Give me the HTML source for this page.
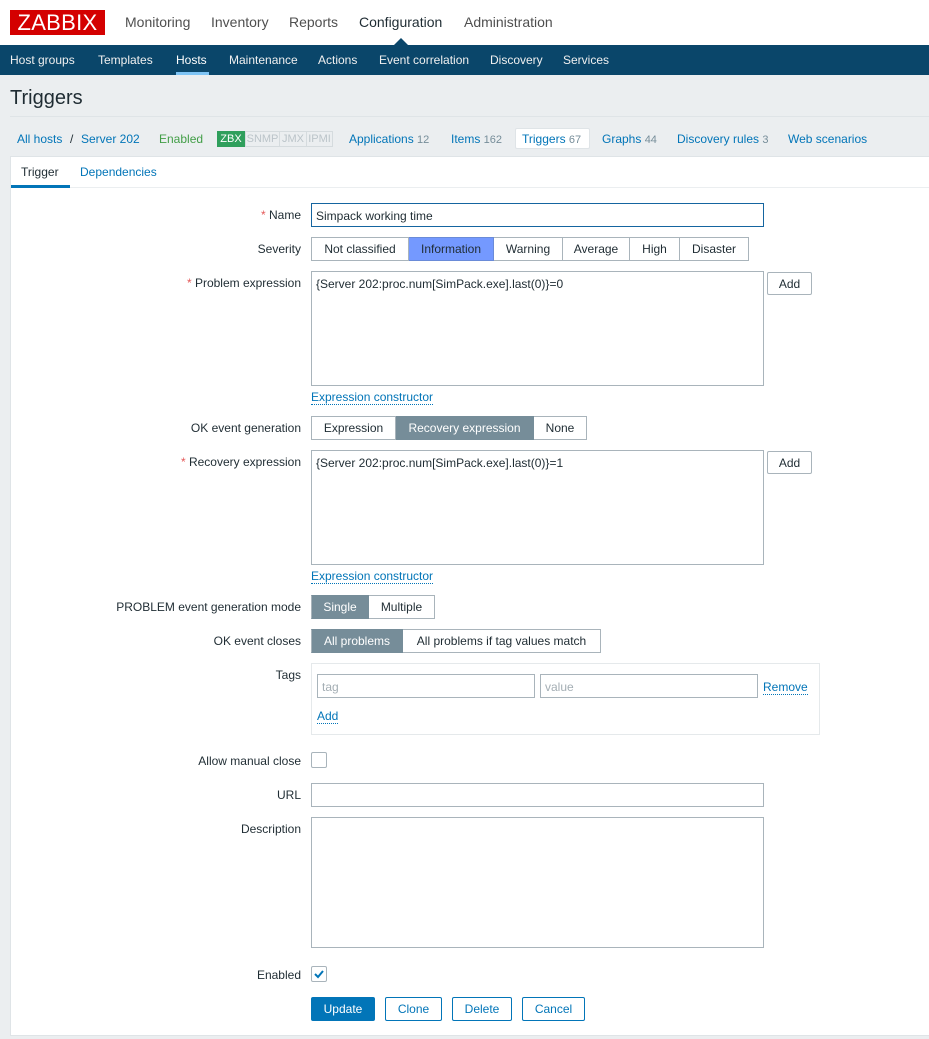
<!DOCTYPE html>
<html><head><meta charset="utf-8"><style>
*{box-sizing:border-box;margin:0;padding:0}
body{width:929px;height:1039px;background:#ebeef0;font-family:"Liberation Sans",Arial,sans-serif;font-size:12px;color:#1f2c33;position:relative;overflow:hidden}
.a{position:absolute;white-space:nowrap}
.top{position:absolute;left:0;top:0;width:929px;height:45px;background:#fff}
.logo{left:10px;top:10px;width:95px;height:25px;background:#d40000;color:#fff;font-size:22px;line-height:25px;text-align:center;letter-spacing:0.3px}
.mm{top:13px;font-size:14px;color:#4f4f4f;line-height:18px}
.nav{position:absolute;left:0;top:45px;width:929px;height:30px;background:#0a466a}
.nv{top:53px;color:#f0f0f0;font-size:12px;line-height:14px}
.lnk{color:#0275b8}
.cnt{color:#768d99}
.panel{position:absolute;left:10px;top:156px;width:919px;height:880px;background:#fff;border:1px solid #dfe4e7;border-right:none}
.lbl{text-align:right;right:628px;line-height:14px}
.req{color:#e45959}
.inp{position:absolute;border:1px solid #a9b4bb;background:#fff}
.btn{position:absolute;border:1px solid #a9b4bb;background:#fff;text-align:center;line-height:22px;color:#1f2c33}
.seg{position:absolute;display:flex;height:24px}
.seg div{border:1px solid #a9b4bb;border-left:none;line-height:22px;text-align:center;background:#fff}
.seg div:first-child{border-left:1px solid #a9b4bb}
.seg .on{background:#768d99;color:#fff;border-color:#768d99}
.ul{border-bottom:1px dotted #0275b8}
.bb{position:absolute;height:24px;border:1px solid #0275b8;color:#0275b8;background:#fff;text-align:center;line-height:22px;border-radius:2px}
.bc{top:132px;line-height:14px}
.bd div{height:16px;line-height:15px;text-align:center}
</style></head><body>
<div class="top"></div>
<div class="a logo">ZABBIX</div>
<div class="a mm" style="left:125px">Monitoring</div>
<div class="a mm" style="left:211px">Inventory</div>
<div class="a mm" style="left:289px">Reports</div>
<div class="a mm" style="left:359px;color:#1f2c33">Configuration</div>
<div class="a mm" style="left:464px">Administration</div>
<div class="nav"></div>
<div class="a" style="left:394px;top:38px;width:0;height:0;border-left:7px solid transparent;border-right:7px solid transparent;border-bottom:7px solid #0a466a"></div>
<div class="a nv" style="left:10px">Host groups</div>
<div class="a nv" style="left:98px">Templates</div>
<div class="a nv" style="left:176px;color:#fff">Hosts</div>
<div class="a" style="left:176px;top:72px;width:33px;height:3px;background:#7ec4f5"></div>
<div class="a nv" style="left:229px">Maintenance</div>
<div class="a nv" style="left:318px">Actions</div>
<div class="a nv" style="left:379px">Event correlation</div>
<div class="a nv" style="left:490px">Discovery</div>
<div class="a nv" style="left:563px">Services</div>

<div class="a" style="left:10px;top:86px;font-size:20px;line-height:24px">Triggers</div>
<div class="a" style="left:10px;top:116px;width:919px;height:1px;background:#dfe4e7"></div>

<div class="a lnk bc" style="left:17px">All hosts</div>
<div class="a bc" style="left:70px">/</div>
<div class="a lnk bc" style="left:81px">Server 202</div>
<div class="a bc" style="left:159px;color:#429e47">Enabled</div>
<div class="a bd" style="left:217px;top:131px;height:16px;display:flex;font-size:11px">
<div style="background:#2f9f5c;color:#fff;width:28px;border:1px solid #2f9f5c">ZBX</div>
<div style="color:#bbc4c9;border:1px solid #d5dbde;width:35px">SNMP</div>
<div style="color:#bbc4c9;border:1px solid #d5dbde;border-left:none;width:27px">JMX</div>
<div style="color:#bbc4c9;border:1px solid #d5dbde;border-left:none;width:26px">IPMI</div></div>
<div class="a lnk bc" style="left:349px">Applications <span class="cnt" style="font-size:11px">12</span></div>
<div class="a lnk bc" style="left:451px">Items <span class="cnt" style="font-size:11px">162</span></div>
<div class="a" style="left:515px;top:128px;width:75px;height:21px;background:#fff;border:1px solid #dfe4e7;border-radius:2px"></div>
<div class="a lnk bc" style="left:522px">Triggers <span class="cnt" style="font-size:11px">67</span></div>
<div class="a lnk bc" style="left:602px">Graphs <span class="cnt" style="font-size:11px">44</span></div>
<div class="a lnk bc" style="left:677px">Discovery rules <span class="cnt" style="font-size:11px">3</span></div>
<div class="a lnk bc" style="left:788px">Web scenarios</div>

<div class="panel"></div>
<div class="a" style="left:21px;top:165px;line-height:14px">Trigger</div>
<div class="a lnk" style="left:80px;top:165px;line-height:14px">Dependencies</div>
<div class="a" style="left:11px;top:187px;width:918px;height:1px;background:#ebeef0"></div>
<div class="a" style="left:11px;top:185px;width:59px;height:3px;background:#0275b8"></div>

<div class="a lbl" style="top:208px"><span class="req">*</span> Name</div>
<div class="inp" style="left:311px;top:203px;width:453px;height:24px;border-color:#1565a0"></div>
<div class="a" style="left:316px;top:209px;line-height:14px">Simpack working time</div>

<div class="a lbl" style="top:242px">Severity</div>
<div class="seg" style="left:311px;top:237px">
<div style="width:98px">Not classified</div><div style="width:85px;background:#7499ff;border-color:#6a8bd8">Information</div><div style="width:69px">Warning</div><div style="width:67px">Average</div><div style="width:50px">High</div><div style="width:69px">Disaster</div></div>

<div class="a lbl" style="top:276px"><span class="req">*</span> Problem expression</div>
<div class="inp" style="left:311px;top:271px;width:453px;height:115px"></div>
<div class="a" style="left:316px;top:277px;line-height:14px">{Server 202:proc.num[SimPack.exe].last(0)}=0</div>
<div class="btn" style="left:767px;top:272px;width:45px;height:23px;border-radius:2px">Add</div>
<div class="a lnk" style="left:311px;top:390px;line-height:14px"><span class="ul">Expression constructor</span></div>

<div class="a lbl" style="top:421px">OK event generation</div>
<div class="seg" style="left:311px;top:416px"><div style="width:85px">Expression</div><div class="on" style="width:138px">Recovery expression</div><div style="width:53px">None</div></div>

<div class="a lbl" style="top:455px"><span class="req">*</span> Recovery expression</div>
<div class="inp" style="left:311px;top:450px;width:453px;height:115px"></div>
<div class="a" style="left:316px;top:456px;line-height:14px">{Server 202:proc.num[SimPack.exe].last(0)}=1</div>
<div class="btn" style="left:767px;top:451px;width:45px;height:23px;border-radius:2px">Add</div>
<div class="a lnk" style="left:311px;top:569px;line-height:14px"><span class="ul">Expression constructor</span></div>

<div class="a lbl" style="top:600px">PROBLEM event generation mode</div>
<div class="seg" style="left:311px;top:595px"><div class="on" style="width:58px">Single</div><div style="width:66px">Multiple</div></div>

<div class="a lbl" style="top:634px">OK event closes</div>
<div class="seg" style="left:311px;top:629px"><div class="on" style="width:92px">All problems</div><div style="width:198px">All problems if tag values match</div></div>

<div class="a lbl" style="top:668px">Tags</div>
<div class="inp" style="left:311px;top:663px;width:509px;height:72px;border-color:#e5e9eb"></div>
<div class="inp" style="left:317px;top:674px;width:218px;height:24px"></div>
<div class="a" style="left:322px;top:680px;line-height:14px;color:#a4aeb4">tag</div>
<div class="inp" style="left:540px;top:674px;width:218px;height:24px"></div>
<div class="a" style="left:545px;top:680px;line-height:14px;color:#a4aeb4">value</div>
<div class="a lnk" style="left:763px;top:680px;line-height:14px"><span class="ul">Remove</span></div>
<div class="a lnk" style="left:317px;top:709px;line-height:14px"><span class="ul">Add</span></div>

<div class="a lbl" style="top:754px">Allow manual close</div>
<div class="inp" style="left:311px;top:752px;width:16px;height:16px;border-radius:2px"></div>

<div class="a lbl" style="top:788px">URL</div>
<div class="inp" style="left:311px;top:783px;width:453px;height:24px"></div>

<div class="a lbl" style="top:822px">Description</div>
<div class="inp" style="left:311px;top:817px;width:453px;height:131px"></div>

<div class="a lbl" style="top:968px">Enabled</div>
<div class="inp" style="left:311px;top:966px;width:16px;height:16px;border-radius:2px"></div>
<svg class="a" style="left:313px;top:968px" width="12" height="12" viewBox="0 0 12 12"><path d="M2 6 L5 9 L10 3" stroke="#0275b8" stroke-width="2" fill="none"/></svg>

<div class="bb" style="left:311px;top:997px;width:64px;background:#0275b8;color:#fff">Update</div>
<div class="bb" style="left:385px;top:997px;width:57px">Clone</div>
<div class="bb" style="left:452px;top:997px;width:60px">Delete</div>
<div class="bb" style="left:522px;top:997px;width:63px">Cancel</div>
</body></html>
